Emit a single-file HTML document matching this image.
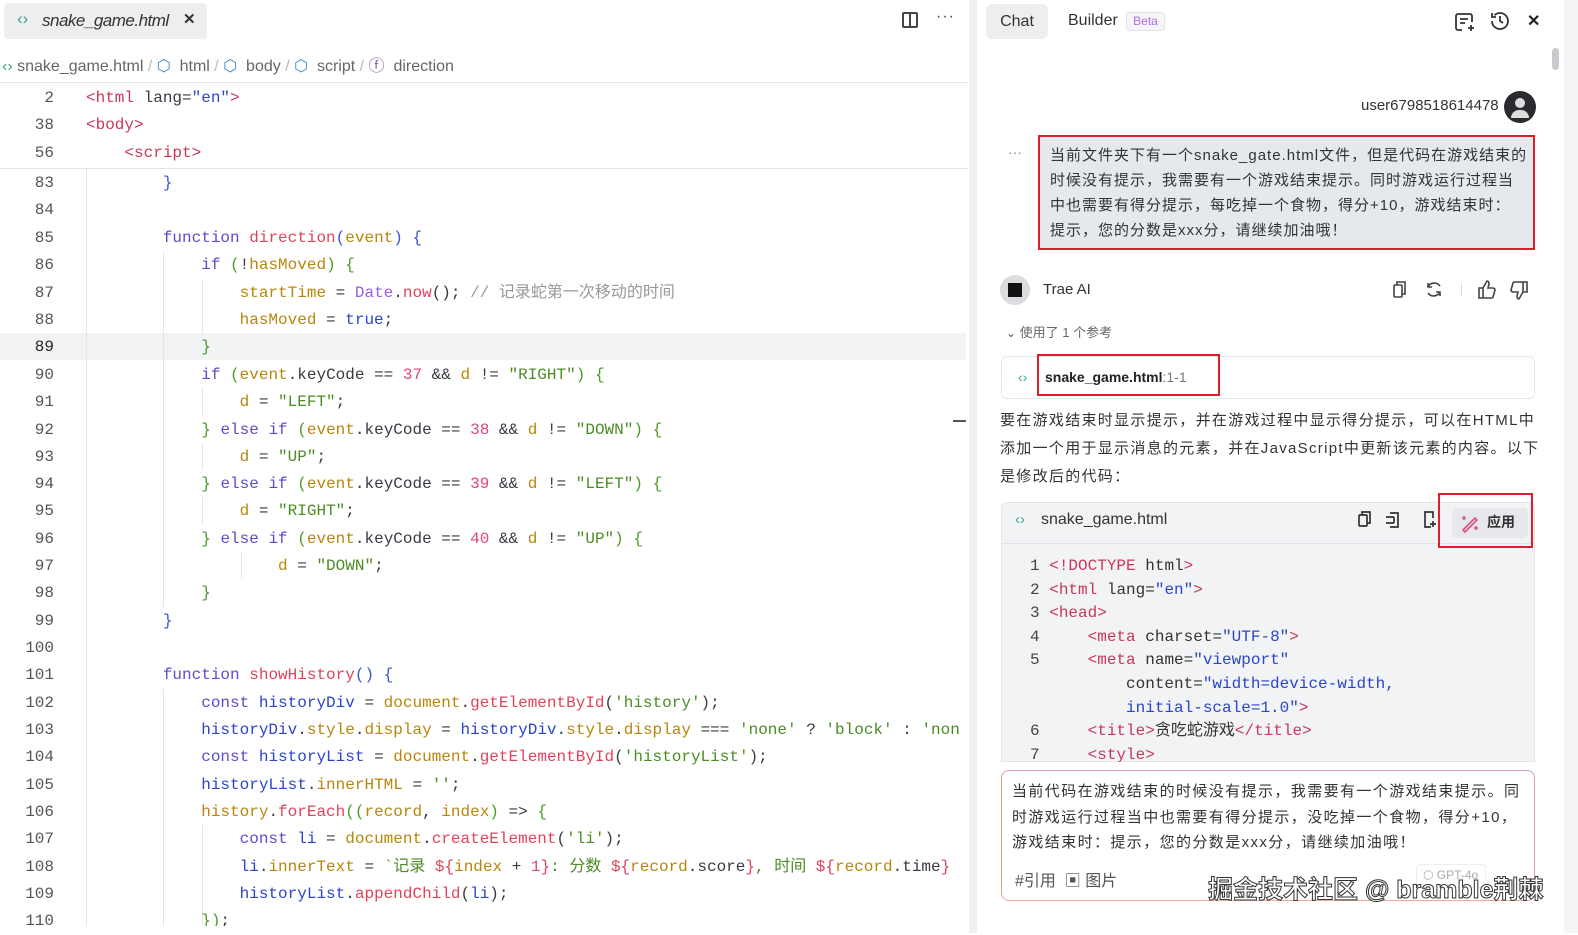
<!DOCTYPE html>
<html><head><meta charset="utf-8"><style>
*{margin:0;padding:0;box-sizing:border-box}
body{width:1578px;height:933px;overflow:hidden;background:#fff;font-family:"Liberation Sans","Noto Sans CJK SC",sans-serif;position:relative;color:#333}
.a{position:absolute}
.code{font-family:"Liberation Mono","Noto Sans CJK SC",monospace;font-size:16px;white-space:pre;color:#383a42}
.ln{position:absolute;left:0;width:54px;text-align:right;color:#555;font-family:"Liberation Mono",monospace;font-size:16px}
.l{position:absolute;left:86px;height:27px;line-height:27px}
.k{color:#5b4ec9}.f{color:#e0445b}.v{color:#b7860b}.s{color:#4c8c24}.n{color:#e0457b}.t{color:#c9385a}.b{color:#3756d0}.g{color:#4c9a2a}.c{color:#999}.d{color:#9b5de5}.e{color:#2b45c8}
.guide{position:absolute;width:1px;background:#e6e6e6}
.red{position:absolute;border:2px solid #d9202c}
.nw{white-space:nowrap}
</style></head><body>
<!-- left editor -->
<div class="a" style="left:4px;top:3px;width:203px;height:36px;background:#eceef0;border-radius:4px"></div>
<div class="a" style="left:17px;top:9px;font-size:17px;color:#3aa88a">‹›</div>
<div class="a" style="left:42px;top:11px;font-size:17px;font-style:italic;color:#333;letter-spacing:-0.5px">snake_game.html</div>
<div class="a" style="left:183px;top:10px;font-size:15px;font-weight:bold;color:#333">✕</div>
<div class="a" style="left:902px;top:12px;width:16px;height:16px;border:2px solid #444;border-radius:2px"><div style="position:absolute;left:5px;top:0;width:2px;height:12px;background:#444"></div></div>
<div class="a" style="left:936px;top:8px;font-size:16px;color:#444;letter-spacing:1px">···</div>
<div class="a" style="left:2px;top:52px;font-size:16px;color:#666;white-space:pre"><span style="color:#3aa88a">‹›</span> snake_game.html <span style="color:#bbb">/</span> <span style="color:#3b90c8">⬡</span>  html <span style="color:#bbb">/</span> <span style="color:#3b90c8">⬡</span>  body <span style="color:#bbb">/</span> <span style="color:#3b90c8">⬡</span>  script <span style="color:#bbb">/</span> <span style="color:#7a55b0">ⓕ</span>  direction</div>
<div class="a" style="left:0;top:82px;width:968px;height:1px;background:#e8e8e8"></div>
<div class="a" style="left:0;top:168px;width:968px;height:1px;background:#e4e4e4"></div>
<div class="a" style="left:0;top:333px;width:966px;height:27px;background:#f2f3f5"></div>
<div class="guide" style="left:86px;top:169px;height:764px"></div>
<div class="guide" style="left:163px;top:252px;height:355px"></div>
<div class="guide" style="left:202px;top:280px;height:55px"></div>
<div class="guide" style="left:202px;top:388px;height:27px"></div>
<div class="guide" style="left:202px;top:443px;height:27px"></div>
<div class="guide" style="left:202px;top:497px;height:27px"></div>
<div class="guide" style="left:241px;top:552px;height:27px"></div>
<div class="guide" style="left:163px;top:689px;height:244px"></div>
<div class="guide" style="left:202px;top:825px;height:108px"></div>
<div class="a" style="left:953px;top:420px;width:13px;height:2px;background:#555"></div>
<div class="code">
<div class="ln" style="top:85px;line-height:27px">2</div><div class="l" style="top:85px"><span class="t">&lt;html</span> lang=<span class="e">"en"</span><span class="t">&gt;</span></div>
<div class="ln" style="top:112px;line-height:27px">38</div><div class="l" style="top:112px"><span class="t">&lt;body&gt;</span></div>
<div class="ln" style="top:140px;line-height:27px">56</div><div class="l" style="top:140px">    <span class="t">&lt;script&gt;</span></div>
<div class="ln" style="top:170px;line-height:27px">83</div><div class="l" style="top:170px">        <span class="b">}</span></div>
<div class="ln" style="top:197px;line-height:27px">84</div>
<div class="ln" style="top:225px;line-height:27px">85</div><div class="l" style="top:225px">        <span class="k">function</span> <span class="f">direction</span><span class="b">(</span><span class="v">event</span><span class="b">)</span> <span class="b">{</span></div>
<div class="ln" style="top:252px;line-height:27px">86</div><div class="l" style="top:252px">            <span class="k">if</span> <span class="g">(</span>!<span class="v">hasMoved</span><span class="g">)</span> <span class="g">{</span></div>
<div class="ln" style="top:280px;line-height:27px">87</div><div class="l" style="top:280px">                <span class="v">startTime</span> = <span class="d">Date</span>.<span class="f">now</span>(); <span class="c">// 记录蛇第一次移动的时间</span></div>
<div class="ln" style="top:307px;line-height:27px">88</div><div class="l" style="top:307px">                <span class="v">hasMoved</span> = <span class="e">true</span>;</div>
<div class="ln" style="top:334px;line-height:27px;color:#222">89</div><div class="l" style="top:334px">            <span class="g">}</span></div>
<div class="ln" style="top:362px;line-height:27px">90</div><div class="l" style="top:362px">            <span class="k">if</span> <span class="g">(</span><span class="v">event</span>.keyCode == <span class="n">37</span> &amp;&amp; <span class="v">d</span> != <span class="s">"RIGHT"</span><span class="g">)</span> <span class="g">{</span></div>
<div class="ln" style="top:389px;line-height:27px">91</div><div class="l" style="top:389px">                <span class="v">d</span> = <span class="s">"LEFT"</span>;</div>
<div class="ln" style="top:417px;line-height:27px">92</div><div class="l" style="top:417px">            <span class="g">}</span> <span class="k">else if</span> <span class="g">(</span><span class="v">event</span>.keyCode == <span class="n">38</span> &amp;&amp; <span class="v">d</span> != <span class="s">"DOWN"</span><span class="g">)</span> <span class="g">{</span></div>
<div class="ln" style="top:444px;line-height:27px">93</div><div class="l" style="top:444px">                <span class="v">d</span> = <span class="s">"UP"</span>;</div>
<div class="ln" style="top:471px;line-height:27px">94</div><div class="l" style="top:471px">            <span class="g">}</span> <span class="k">else if</span> <span class="g">(</span><span class="v">event</span>.keyCode == <span class="n">39</span> &amp;&amp; <span class="v">d</span> != <span class="s">"LEFT"</span><span class="g">)</span> <span class="g">{</span></div>
<div class="ln" style="top:498px;line-height:27px">95</div><div class="l" style="top:498px">                <span class="v">d</span> = <span class="s">"RIGHT"</span>;</div>
<div class="ln" style="top:526px;line-height:27px">96</div><div class="l" style="top:526px">            <span class="g">}</span> <span class="k">else if</span> <span class="g">(</span><span class="v">event</span>.keyCode == <span class="n">40</span> &amp;&amp; <span class="v">d</span> != <span class="s">"UP"</span><span class="g">)</span> <span class="g">{</span></div>
<div class="ln" style="top:553px;line-height:27px">97</div><div class="l" style="top:553px">                    <span class="v">d</span> = <span class="s">"DOWN"</span>;</div>
<div class="ln" style="top:580px;line-height:27px">98</div><div class="l" style="top:580px">            <span class="g">}</span></div>
<div class="ln" style="top:608px;line-height:27px">99</div><div class="l" style="top:608px">        <span class="b">}</span></div>
<div class="ln" style="top:635px;line-height:27px">100</div>
<div class="ln" style="top:662px;line-height:27px">101</div><div class="l" style="top:662px">        <span class="k">function</span> <span class="f">showHistory</span><span class="b">()</span> <span class="b">{</span></div>
<div class="ln" style="top:690px;line-height:27px">102</div><div class="l" style="top:690px">            <span class="k">const</span> <span class="e">historyDiv</span> = <span class="v">document</span>.<span class="f">getElementById</span>(<span class="s">'history'</span>);</div>
<div class="ln" style="top:717px;line-height:27px">103</div><div class="l" style="top:717px">            <span class="e">historyDiv</span>.<span class="v">style</span>.<span class="v">display</span> = <span class="e">historyDiv</span>.<span class="v">style</span>.<span class="v">display</span> === <span class="s">'none'</span> ? <span class="s">'block'</span> : <span class="s">'non</span></div>
<div class="ln" style="top:744px;line-height:27px">104</div><div class="l" style="top:744px">            <span class="k">const</span> <span class="e">historyList</span> = <span class="v">document</span>.<span class="f">getElementById</span>(<span class="s">'historyList'</span>);</div>
<div class="ln" style="top:772px;line-height:27px">105</div><div class="l" style="top:772px">            <span class="e">historyList</span>.<span class="v">innerHTML</span> = <span class="s">''</span>;</div>
<div class="ln" style="top:799px;line-height:27px">106</div><div class="l" style="top:799px">            <span class="v">history</span>.<span class="f">forEach</span><span class="g">((</span><span class="v">record</span>, <span class="v">index</span><span class="g">)</span> =&gt; <span class="g">{</span></div>
<div class="ln" style="top:826px;line-height:27px">107</div><div class="l" style="top:826px">                <span class="k">const</span> <span class="e">li</span> = <span class="v">document</span>.<span class="f">createElement</span>(<span class="s">'li'</span>);</div>
<div class="ln" style="top:854px;line-height:27px">108</div><div class="l" style="top:854px">                <span class="e">li</span>.<span class="v">innerText</span> = <span class="s">`记录 </span><span class="f">${</span><span class="v">index</span> + <span class="n">1</span><span class="f">}</span><span class="s">: 分数 </span><span class="f">${</span><span class="v">record</span>.score<span class="f">}</span><span class="s">, 时间 </span><span class="f">${</span><span class="v">record</span>.time<span class="f">}</span></div>
<div class="ln" style="top:881px;line-height:27px">109</div><div class="l" style="top:881px">                <span class="e">historyList</span>.<span class="f">appendChild</span>(<span class="e">li</span>);</div>
<div class="ln" style="top:908px;line-height:27px">110</div><div class="l" style="top:908px">            <span class="g">})</span>;</div>
</div>
<div class="a" style="left:0;top:926px;width:975px;height:7px;background:#fff"></div>
<!-- divider -->
<div class="a" style="left:969px;top:0;width:8px;height:933px;background:#eef0f2"></div>
<div class="a" style="left:1564px;top:0;width:14px;height:933px;background:#f4f5f6"></div>
<div class="a" style="left:1552px;top:48px;width:7px;height:22px;background:#c8cacd;border-radius:4px"></div>
<!-- right panel -->
<div class="a" style="left:986px;top:4px;width:62px;height:35px;background:#eceef0;border-radius:6px;font-size:16px;line-height:35px;text-align:center;color:#333">Chat</div>
<div class="a" style="left:1068px;top:12px;font-size:16px;color:#333">Builder</div>
<div class="a" style="left:1126px;top:12px;width:39px;height:19px;border:1px solid #e3e3e6;background:#f5f5f7;border-radius:3px;font-size:12px;line-height:17px;text-align:center;color:#b070e0">Beta</div>
<svg class="a" style="left:1454px;top:11px" width="22" height="22" viewBox="0 0 22 22" fill="none" stroke="#333" stroke-width="1.8"><path d="M8 19H4a2 2 0 0 1-2-2V5a2 2 0 0 1 2-2h12a2 2 0 0 1 2 2v6M6 8h8M6 12h5M17 14v6M14 17h6"/></svg>
<svg class="a" style="left:1489px;top:10px" width="22" height="22" viewBox="0 0 22 22" fill="none" stroke="#333" stroke-width="1.8"><path d="M3 11a8 8 0 1 0 2.5-5.8M3 3v4h4M11 6v5l3 2"/></svg>
<div class="a" style="left:1527px;top:11px;font-size:16px;font-weight:bold;color:#222">✕</div>
<div class="a" style="left:1361px;top:97px;font-size:15px;color:#333">user6798518614478</div>
<div class="a" style="left:1504px;top:91px;width:32px;height:32px;border-radius:50%;background:#2a2b2e;overflow:hidden"><div style="position:absolute;left:11px;top:7px;width:10px;height:10px;border-radius:50%;background:#ddd"></div><div style="position:absolute;left:7px;top:19px;width:18px;height:8px;border-radius:9px 9px 0 0;background:#ddd"></div></div>
<div class="a" style="left:1008px;top:144px;font-size:14px;color:#888">···</div>
<div class="a" style="left:1038px;top:135px;width:497px;height:115px;background:#e5e8ec"></div>
<div class="red" style="left:1038px;top:135px;width:497px;height:115px"></div>
<div class="a nw" style="left:1050px;top:143px;font-size:15px;line-height:25px;color:#333;letter-spacing:1px">当前文件夹下有一个snake_gate.html文件，但是代码在游戏结束的<br>时候没有提示，我需要有一个游戏结束提示。同时游戏运行过程当<br>中也需要有得分提示，每吃掉一个食物，得分+10，游戏结束时：<br>提示，您的分数是xxx分，请继续加油哦！</div>
<div class="a" style="left:1000px;top:275px;width:30px;height:30px;border-radius:50%;background:#dadcdf"><div style="position:absolute;left:8px;top:8px;width:14px;height:14px;background:#111"></div></div>
<div class="a" style="left:1043px;top:281px;font-size:15px;color:#333">Trae AI</div>
<svg class="a" style="left:1390px;top:279px" width="60" height="22" viewBox="0 0 60 22" fill="none" stroke="#444" stroke-width="1.6"><rect x="4" y="6" width="8" height="12" rx="1"/><path d="M7 6V3h8v12h-3"/><path d="M50 7a7 7 0 0 0-12 1M38 14a7 7 0 0 0 12-1M38 4v4h4M50 17v-4h-4"/></svg>
<div class="a" style="left:1461px;top:283px;width:1px;height:14px;background:#ddd"></div>
<svg class="a" style="left:1477px;top:279px" width="52" height="22" viewBox="0 0 52 22" fill="none" stroke="#444" stroke-width="1.6"><path d="M2 9h4v10H2zM6 9l4-7c2 0 2 2 2 3l-1 4h5c1 0 2 1 2 2l-2 7c0 1-1 1-2 1H6"/><path d="M50 13h-4V3h4zM46 13l-4 7c-2 0-2-2-2-3l1-4h-5c-1 0-2-1-2-2l2-7c0-1 1-1 2-1h8"/></svg>
<div class="a" style="left:1006px;top:322px;font-size:13px;color:#666"><span style="font-size:12px;color:#555">⌄</span> 使用了 1 个参考</div>
<div class="a" style="left:1001px;top:356px;width:534px;height:43px;border:1px solid #e6e6e8;border-radius:6px"></div>
<div class="a" style="left:1018px;top:369px;font-size:14px;color:#3aa88a">‹›</div>
<div class="red" style="left:1037px;top:354px;width:183px;height:42px"></div>
<div class="a" style="left:1045px;top:369px;font-size:14px;color:#222"><b>snake_game.html</b><span style="color:#777">:1-1</span></div>
<div class="a nw" style="left:1000px;top:407px;font-size:15px;line-height:28px;color:#333;letter-spacing:1.3px">要在游戏结束时显示提示，并在游戏过程中显示得分提示，可以在HTML中<br>添加一个用于显示消息的元素，并在JavaScript中更新该元素的内容。以下<br>是修改后的代码：</div>
<div class="a" style="left:1001px;top:502px;width:534px;height:260px;background:#f2f3f5;border:1px solid #e6e6e8;border-radius:6px 6px 0 0"></div>
<div class="a" style="left:1001px;top:543px;width:534px;height:1px;background:#e2e3e6"></div>
<div class="a" style="left:1015px;top:511px;font-size:15px;color:#3aa88a">‹›</div>
<div class="a" style="left:1041px;top:511px;font-size:16px;color:#333">snake_game.html</div>
<svg class="a" style="left:1356px;top:509px" width="84" height="22" viewBox="0 0 84 22" fill="none" stroke="#333" stroke-width="1.7"><rect x="3" y="6" width="8" height="11" rx="1"/><path d="M6 6V3h8v11h-3"/><path d="M34 4h8v14h-8M30 8h8M30 14h8M38 8v6"/><path d="M75 18h-6V3h8v6M77 12v6M74 15h6"/></svg>
<div class="a" style="left:1452px;top:508px;width:76px;height:30px;background:#e6e8eb;border-radius:5px"></div>
<svg class="a" style="left:1460px;top:513px" width="20" height="20" viewBox="0 0 20 20" fill="none" stroke="#e04a8a" stroke-width="1.6"><path d="M3 17L15 5l2 2L5 19zM4 3v4M2 5h4M16 13v4M14 15h4"/></svg>
<div class="a" style="left:1487px;top:512px;font-size:14px;font-weight:bold;color:#333">应用</div>
<div class="red" style="left:1438px;top:493px;width:95px;height:55px"></div>
<div class="code" style="position:absolute;left:1030px;top:555px;line-height:23.6px;color:#333"><span style="color:#444">1</span> <span class="t">&lt;!DOCTYPE</span> html<span class="t">&gt;</span>
<span style="color:#444">2</span> <span class="t">&lt;html</span> lang=<span class="e">"en"</span><span class="t">&gt;</span>
<span style="color:#444">3</span> <span class="t">&lt;head&gt;</span>
<span style="color:#444">4</span>     <span class="t">&lt;meta</span> charset=<span class="e">"UTF-8"</span><span class="t">&gt;</span>
<span style="color:#444">5</span>     <span class="t">&lt;meta</span> name=<span class="e">"viewport"</span>
          content=<span class="e">"width=device-width,</span>
          <span class="e">initial-scale=1.0"</span><span class="t">&gt;</span>
<span style="color:#444">6</span>     <span class="t">&lt;title&gt;</span>贪吃蛇游戏<span class="t">&lt;/title&gt;</span>
<span style="color:#444">7</span>     <span class="t">&lt;style&gt;</span></div>
<div class="a" style="left:990px;top:762px;width:560px;height:171px;background:#fff"></div>
<div class="a" style="left:1001px;top:770px;width:534px;height:131px;border:1.5px solid #d9a0c8;border-radius:8px;border-left-color:#ee9a8a;border-bottom-color:#eeaaa0"></div>
<div class="a nw" style="left:1012px;top:779px;font-size:15px;line-height:25.5px;color:#333;letter-spacing:1.4px">当前代码在游戏结束的时候没有提示，我需要有一个游戏结束提示。同<br>时游戏运行过程当中也需要有得分提示，没吃掉一个食物，得分+10，<br>游戏结束时：提示，您的分数是xxx分，请继续加油哦！</div>
<div class="a" style="left:1015px;top:867px;font-size:16px;color:#555">#引用 &nbsp;▣ 图片</div>
<div class="a" style="left:1416px;top:864px;width:70px;height:24px;border:1px solid #eee;border-radius:4px;font-size:12px;color:#aaa;padding:3px 6px">⬡ GPT-4o</div>
<div class="a" style="left:1208px;top:870px;font-size:25px;color:#fff;-webkit-text-stroke:1px #333;font-weight:bold;white-space:nowrap">掘金技术社区 @ bramble荆棘</div>
</body></html>
